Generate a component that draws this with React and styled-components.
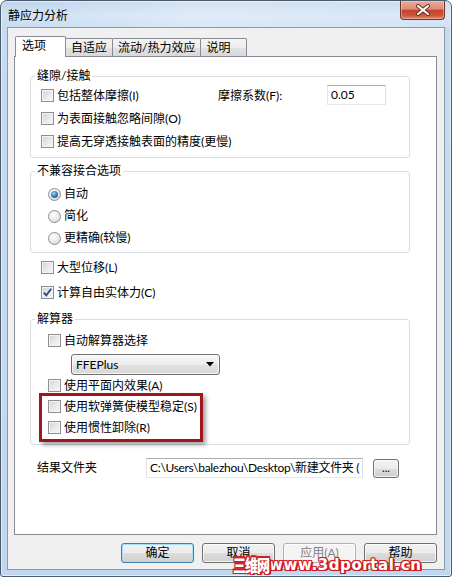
import React from "react";
import styled, { createGlobalStyle } from "styled-components";

const GlobalStyle = createGlobalStyle`
  html, body { margin: 0; padding: 0; background: #ffffff; }
  body {
    font-family: "Lato", "Noto Sans CJK SC", sans-serif;
    font-size: 12px;
    color: #000;
  }
  * { box-sizing: border-box; }
`;

const Window = styled.div`
  position: relative;
  width: 452px;
  height: 577px;
  border: 1px solid #4b5a6b;
  border-radius: 7px 7px 3px 3px;
  background: linear-gradient(180deg, #bcd3ec 0px, #cfe1f4 14px, #c6dbf1 27px, #c1d7ef 100%);
  box-shadow: inset 0 0 0 1px rgba(255, 255, 255, 0.55);
  padding: 0 6px 6px;
  display: flex;
  flex-direction: column;
  overflow: hidden;
`;

const TitleBar = styled.div`
  height: 26px;
  margin: 0 -6px;
  padding: 0 6px 0 7px;
  display: flex;
  justify-content: space-between;
  align-items: flex-start;
  background: linear-gradient(90deg, rgba(255,255,255,0) 0%, rgba(255,255,255,0.35) 45%, rgba(255,255,255,0.2) 100%);
`;

const Title = styled.div`
  margin-top: 6px;
  line-height: 17px;
  font-size: 12px;
  color: #000;
`;

const CloseButton = styled.div`
  width: 45px;
  height: 19px;
  border: 1px solid #6e3429;
  border-top: none;
  border-radius: 0 0 4px 4px;
  background: linear-gradient(180deg, #e9ab9c 0%, #dd8b78 45%, #c6432c 52%, #cc5239 78%, #e08a68 100%);
  box-shadow: inset 0 0 0 1px rgba(255, 220, 210, 0.45);
  display: flex;
  align-items: center;
  justify-content: center;
`;

const Client = styled.div`
  flex: 1;
  border: 1px solid #8b9aaa;
  background: #f0f0f0;
  display: flex;
  flex-direction: column;
  padding-top: 8px;
`;

const TabStrip = styled.div`
  height: 20px;
  display: flex;
  align-items: flex-end;
  padding-left: 7px;
`;

const Tab = styled.div`
  position: relative;
  z-index: ${(p) => (p.$active ? 2 : 1)};
  min-width: ${(p) => (p.$active ? 51 : 47)}px;
  height: ${(p) => (p.$active ? 21 : 18)}px;
  margin-left: ${(p) => (p.$first ? 0 : -1)}px;
  margin-bottom: ${(p) => (p.$active ? -1 : 0)}px;
  padding: ${(p) => (p.$active ? "0 6px 2px" : "0 5px")};
  border: 1px solid #898c95;
  border-bottom: none;
  border-radius: 2px 2px 0 0;
  background: ${(p) =>
    p.$active
      ? "#ffffff"
      : "linear-gradient(180deg, #f4f4f4 0%, #ededed 50%, #e2e2e2 51%, #d9d9d9 100%)"};
  display: flex;
  align-items: center;
  line-height: 16px;
  white-space: nowrap;
`;

const Panel = styled.div`
  flex: 1;
  margin: 0 7px 0 6px;
  border: 1px solid #898c95;
  background: #ffffff;
  padding-left: 15px;
  display: flex;
  flex-direction: column;
  align-items: flex-start;
`;

const Group = styled.fieldset`
  width: 380px;
  margin: ${(p) => p.$mt}px 0 0 0;
  padding: 0;
  border: 1px solid #d5dfe5;
  border-radius: 3px;
  min-inline-size: auto;
`;

const Legend = styled.legend`
  margin-left: 4px;
  padding: 0 2px;
  line-height: 16px;
  font-size: 12px;
`;

const GroupBody = styled.div`
  display: flex;
  flex-direction: column;
  align-items: flex-start;
  padding: ${(p) => p.$pt}px 0 ${(p) => p.$pb}px ${(p) => p.$pl}px;
`;

const Row = styled.div`
  height: ${(p) => p.$h}px;
  display: flex;
  align-items: center;
`;

const Option = styled.label`
  display: inline-flex;
  align-items: center;
  gap: 3px;
  width: ${(p) => (p.$w ? `${p.$w}px` : "auto")};
  line-height: 16px;
  white-space: nowrap;
`;

const CheckBox = styled.span`
  width: 13px;
  height: 13px;
  flex: none;
  border: 1px solid #8e8f8f;
  background: linear-gradient(135deg, #cfd2d7 0%, #e9eaec 55%, #f8f8f8 100%);
  box-shadow: inset 0 0 0 1px #f4f4f4;
  display: flex;
  align-items: center;
  justify-content: center;
`;

const Radio = styled.span`
  width: 13px;
  height: 13px;
  flex: none;
  border: 1px solid #8e8f8f;
  border-radius: 50%;
  background: radial-gradient(circle at 40% 35%, #ffffff 0%, #eeeeee 45%, #cdcdcd 100%);
  display: flex;
  align-items: center;
  justify-content: center;
`;

const RadioDot = styled.span`
  width: 7px;
  height: 7px;
  border-radius: 50%;
  background: radial-gradient(circle at 40% 35%, #9fdcf9 0%, #3f8fcd 40%, #0f3c6e 100%);
`;

const FieldLabel = styled.span`
  width: ${(p) => p.$w}px;
  line-height: 16px;
  white-space: nowrap;
`;

const TextBox = styled.div`
  width: ${(p) => p.$w}px;
  height: 20px;
  margin-top: ${(p) => p.$mt || 0}px;
  border: 1px solid;
  border-color: #abadb3 #dbdfe6 #e3e9ef #e2e3ea;
  background: #ffffff;
  padding-left: 3px;
  line-height: 18px;
  letter-spacing: ${(p) => (p.$tight ? "-0.3px" : "normal")};
  white-space: nowrap;
  overflow: hidden;
`;

const Combo = styled.div`
  width: 149px;
  height: 21px;
  margin: 2px 0 0 23px;
  border: 1px solid #707070;
  border-radius: 3px;
  background: linear-gradient(180deg, #f6f6f6 0%, #ececec 50%, #e1e1e1 51%, #d8d8d8 100%);
  box-shadow: inset 0 0 0 1px rgba(255, 255, 255, 0.7);
  padding: 0 5px 0 4px;
  display: flex;
  align-items: center;
  justify-content: space-between;
  line-height: 16px;
`;

const OptionList = styled.div`
  margin-top: 2px;
  padding-left: 11px;
  display: flex;
  flex-direction: column;
`;

const Highlighted = styled.div`
  position: relative;
  display: flex;
  flex-direction: column;
`;

const Marker = styled.div`
  position: absolute;
  left: -9px;
  top: -3px;
  width: 164px;
  height: 49px;
  border: 3px solid #a3141c;
  box-shadow: 3px 3px 4px rgba(0, 0, 0, 0.35);
  pointer-events: none;
`;

const FolderRow = styled.div`
  height: 20px;
  margin-top: 13px;
  padding-left: 7px;
  display: flex;
  align-items: center;
`;

const SmallButton = styled.div`
  width: 26px;
  height: 19px;
  margin-left: 10px;
  border: 1px solid #707070;
  border-radius: 3px;
  background: linear-gradient(180deg, #f2f2f2 0%, #ebebeb 50%, #dddddd 51%, #cfcfcf 100%);
  box-shadow: inset 0 0 0 1px rgba(255, 255, 255, 0.7);
  display: flex;
  align-items: center;
  justify-content: center;
  line-height: 12px;
  font-size: 11px;
`;

const ButtonBar = styled.div`
  height: 20px;
  margin: 8px 0 6px;
  padding-right: 7px;
  display: flex;
  justify-content: flex-end;
  gap: 8px;
`;

const DialogButton = styled.div`
  width: 73px;
  height: 20px;
  border: 1px solid ${(p) => (p.$default ? "#3c7fb1" : p.$disabled ? "#adb2b5" : "#707070")};
  border-radius: 3px;
  background: ${(p) =>
    p.$disabled
      ? "#f4f4f4"
      : "linear-gradient(180deg, #f2f2f2 0%, #ebebeb 50%, #dddddd 51%, #cfcfcf 100%)"};
  box-shadow: inset 0 0 0 1px ${(p) => (p.$default ? "#a6def5" : "rgba(255,255,255,0.7)")};
  color: ${(p) => (p.$disabled ? "#838383" : "#000")};
  display: flex;
  align-items: center;
  justify-content: center;
  line-height: 16px;
`;

const Watermark = styled.div`
  position: absolute;
  left: 232px;
  top: 554px;
  display: flex;
  align-items: center;
  font-family: "DejaVu Sans", "Noto Sans CJK SC", sans-serif;
  font-weight: 900;
  color: #ffffff;
  white-space: nowrap;
  text-shadow: 1px 0 #d21c24, -1px 0 #d21c24, 0 1px #d21c24, 0 -1px #d21c24,
    1px 1px #d21c24, -1px -1px #d21c24, 1px -1px #d21c24, -1px 1px #d21c24,
    2px 1px #b0151b;
`;

const WmCn = styled.span`
  font-family: "Noto Sans CJK SC", sans-serif;
  font-size: 13px;
  font-weight: 900;
  letter-spacing: -1px;
  transform: scaleY(1.3);
`;

const WmEn = styled.span`
  font-size: 15px;
  letter-spacing: 0.6px;
`;

const Check = ({ checked }) => (
  <CheckBox>
    {checked && (
      <svg width="11" height="11" viewBox="0 0 11 11">
        <path d="M1.8 5.6 L4.3 8.3 L9.2 1.8" fill="none" stroke="#29488c" strokeWidth="1.8" />
      </svg>
    )}
  </CheckBox>
);

const tabs = [
  { label: "选项", active: true },
  { label: "自适应" },
  { label: "流动/热力效应" },
  { label: "说明" },
];

export default function App() {
  return (
    <>
      <GlobalStyle />
      <Window>
        <TitleBar>
          <Title>静应力分析</Title>
          <CloseButton>
            <svg width="16" height="12" viewBox="0 0 16 12">
              <path d="M3 2 L13 10 M13 2 L3 10" stroke="#6b2a22" strokeWidth="4" strokeLinecap="round" />
              <path d="M3 2 L13 10 M13 2 L3 10" stroke="#ffffff" strokeWidth="2.2" strokeLinecap="round" />
            </svg>
          </CloseButton>
        </TitleBar>
        <Client>
          <TabStrip>
            {tabs.map((t, i) => (
              <Tab key={t.label} $active={t.active} $first={i === 0}>
                {t.label}
              </Tab>
            ))}
          </TabStrip>
          <Panel>
            <Group $mt={11}>
              <Legend>缝隙/接触</Legend>
              <GroupBody $pt={0} $pb={4} $pl={10}>
                <Row $h={23}>
                  <Option $w={177}>
                    <Check />
                    包括整体摩擦(I)
                  </Option>
                  <FieldLabel $w={109}>摩擦系数(F):</FieldLabel>
                  <TextBox $w={59} $mt={-2}>0.05</TextBox>
                </Row>
                <Row $h={23}>
                  <Option>
                    <Check />
                    为表面接触忽略间隙(O)
                  </Option>
                </Row>
                <Row $h={23}>
                  <Option>
                    <Check />
                    提高无穿透接触表面的精度(更慢)
                  </Option>
                </Row>
              </GroupBody>
            </Group>

            <Group $mt={5}>
              <Legend>不兼容接合选项</Legend>
              <GroupBody $pt={4} $pb={3} $pl={17}>
                <Row $h={22}>
                  <Option>
                    <Radio>
                      <RadioDot />
                    </Radio>
                    自动
                  </Option>
                </Row>
                <Row $h={22}>
                  <Option>
                    <Radio />
                    简化
                  </Option>
                </Row>
                <Row $h={22}>
                  <Option>
                    <Radio />
                    更精确(较慢)
                  </Option>
                </Row>
              </GroupBody>
            </Group>

            <OptionList>
              <Row $h={25}>
                <Option>
                  <Check />
                  大型位移(L)
                </Option>
              </Row>
              <Row $h={25}>
                <Option>
                  <Check checked />
                  计算自由实体力(C)
                </Option>
              </Row>
            </OptionList>

            <Group $mt={6}>
              <Legend>解算器</Legend>
              <GroupBody $pt={2} $pb={6} $pl={17}>
                <Row $h={23}>
                  <Option>
                    <Check />
                    自动解算器选择
                  </Option>
                </Row>
                <Combo>
                  <span>FFEPlus</span>
                  <svg width="8" height="5" viewBox="0 0 8 5">
                    <path d="M0 0 H8 L4 4.5 Z" fill="#000" />
                  </svg>
                </Combo>
                <Row $h={21}>
                  <Option>
                    <Check />
                    使用平面内效果(A)
                  </Option>
                </Row>
                <Highlighted>
                  <Row $h={21}>
                    <Option>
                      <Check />
                      使用软弹簧使模型稳定(S)
                    </Option>
                  </Row>
                  <Row $h={21}>
                    <Option>
                      <Check />
                      使用惯性卸除(R)
                    </Option>
                  </Row>
                  <Marker />
                </Highlighted>
              </GroupBody>
            </Group>

            <FolderRow>
              <FieldLabel $w={109}>结果文件夹</FieldLabel>
              <TextBox $w={217} $tight>C:\Users\balezhou\Desktop\新建文件夹 (</TextBox>
              <SmallButton>...</SmallButton>
            </FolderRow>
          </Panel>
          <ButtonBar>
            <DialogButton $default>确定</DialogButton>
            <DialogButton>取消</DialogButton>
            <DialogButton $disabled>应用(A)</DialogButton>
            <DialogButton>帮助</DialogButton>
          </ButtonBar>
        </Client>
        <Watermark>
          <WmCn>三维网</WmCn>
          <WmEn>www.3dportal.cn</WmEn>
        </Watermark>
      </Window>
    </>
  );
}
